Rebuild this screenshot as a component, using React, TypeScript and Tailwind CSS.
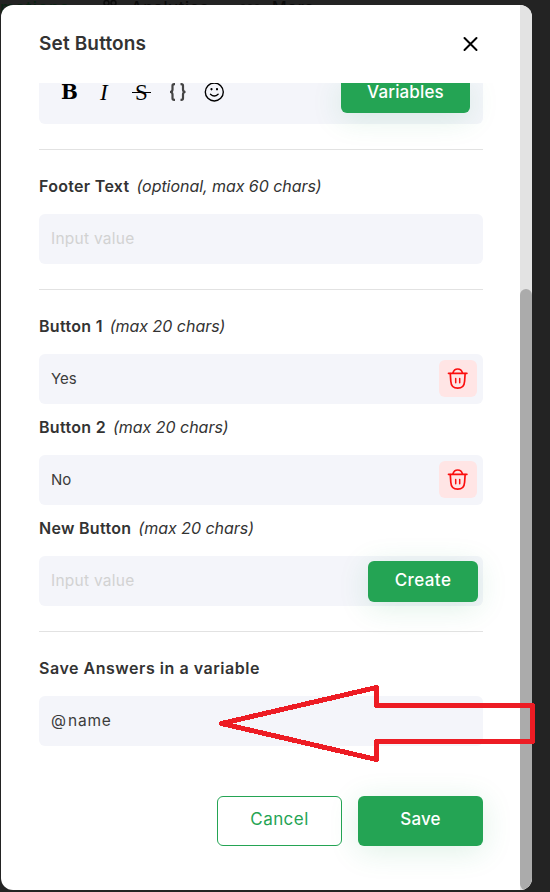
import { useState } from 'react'
import type { ReactNode } from 'react'

function TrashIcon() {
  return (
    <svg width="22" height="22" viewBox="0 0 22 22" fill="none" stroke="#fb0f0f" strokeWidth="1.7" strokeLinecap="round">
      <path d="M1.5 5.3h18.4" />
      <path d="M6 4.8C6.8 2 8.6 1 10.7 1s3.9 1 4.7 3.8" />
      <path d="M3.3 5.7l.5 7.5c.3 4.7 2.6 7 6.9 7s6.6-2.3 6.9-7l.5-7.5" />
      <path d="M8.7 10.5v4.3M12.700 10.5v4.3" strokeWidth="1.5" />
    </svg>
  )
}

function Label({ children, hint }: { children: ReactNode; hint?: ReactNode }) {
  return (
    <div className="flex h-6 items-center gap-[7px] whitespace-nowrap text-base text-[#333]">
      <span className="font-semibold tracking-[0.3px]">{children}</span>
      {hint}
    </div>
  )
}

function Field({ value, placeholder, children }: { value?: ReactNode; placeholder?: string; children?: ReactNode }) {
  return (
    <div className="mt-4 flex h-[50px] items-center justify-between rounded-md bg-[#f4f5fa] pl-3 text-[15px]">
      {value ? (
        <span className="text-[#3c3c3c]">{value}</span>
      ) : (
        <span className="text-[15.5px] tracking-[0.26px] text-[#d2d2d2]">{placeholder}</span>
      )}
      {children}
    </div>
  )
}

function DeleteButton({ onClick }: { onClick: () => void }) {
  return (
    <button onClick={onClick} className="mr-1.5 mb-px flex h-[37px] w-[38px] items-center justify-center rounded-md bg-[#ffe5e5]">
      <TrashIcon />
    </button>
  )
}

function Divider() {
  return <div className="mt-[25px] mb-6 h-px bg-[#e2e2e2]" />
}

const hint20 = <span className="italic tracking-[-0.02px]">(max 20 chars)</span>

export default function App() {
  const [removed, setRemoved] = useState<number[]>([])

  return (
    <div className="relative h-[892px] w-[550px] overflow-hidden bg-[#232323] pt-[5px] pl-px font-['Inter',sans-serif]">
      {/* dimmed page nav behind the modal */}
      <div className="absolute top-[-5px] left-0 flex h-6 items-center whitespace-nowrap text-base font-medium text-[#0b0b0b]">
        <span className="w-[103px] tracking-[1.3px] text-[#0a2213]">mations</span>
        <svg width="14" height="16" viewBox="0 0 14 16" fill="none" stroke="currentColor" strokeWidth="1.5">
          <circle cx="3.5" cy="4" r="2.5" />
          <circle cx="10.5" cy="4" r="2.5" />
          <circle cx="3.5" cy="12" r="2.5" />
          <circle cx="10.5" cy="12" r="2.5" />
        </svg>
        <span className="ml-3.5 w-[109px] tracking-[0.8px]">Analytics</span>
        <svg width="20" height="6" viewBox="0 0 20 6" fill="none" stroke="currentColor" strokeWidth="1.5">
          <circle cx="3" cy="3" r="2" />
          <circle cx="10" cy="3" r="2" />
          <circle cx="17" cy="3" r="2" />
        </svg>
        <span className="ml-3 tracking-[0.7px]">More</span>
      </div>

      <div className="relative flex h-[885px] w-[531px] overflow-hidden rounded-xl bg-white">
        <div className="flex w-[519px] flex-col">
          <header className="flex h-[78px] shrink-0 items-center justify-between pr-[41px] pl-[38px]">
            <h2 className="text-[19px] font-semibold tracking-[0.15px] text-[#333]">Set Buttons</h2>
            <button>
              <svg width="17" height="17" viewBox="0 0 17 17" stroke="#000" strokeWidth="2" strokeLinecap="round">
                <path d="M2.5 2l12 12M14.5 2l-12 12" />
              </svg>
            </button>
          </header>

          <main className="flex-1 overflow-hidden pr-[37px] pl-[38px]">
            {/* editor toolbar, scrolled partly under the header */}
            <div className="flex h-[41px] items-start justify-between rounded-b-md bg-[#f4f5fa] pr-[13px] pl-[22px]">
              <div className="flex h-[18px] items-center text-black">
                <span className="w-[39px] font-['DejaVu_Serif',serif] text-[20px] leading-none font-bold">B</span>
                <span className="w-8 font-['Liberation_Serif',serif] text-[23px] leading-none italic">I</span>
                <span className="relative flex w-[37px] font-['Liberation_Serif',serif] text-[23px] leading-none">
                  <span className="ml-[3px]">S</span>
                  <i className="absolute top-[11px] left-0 h-[1.5px] w-[19px] bg-black" />
                </span>
                <svg width="18" height="18" viewBox="0 0 18 18" fill="none" stroke="#444" strokeWidth="2.2" className="mr-[17px]">
                  <path d="M6 1.2H5.2Q3.5 1.2 3.5 2.7V6.5Q3.5 9 1 9Q3.5 9 3.5 11.5V15.3Q3.5 16.8 5.2 16.8H6M11.5 1.2h.8q1.7 0 1.7 1.5V6.5Q14 9 16.5 9Q14 9 14 11.5V15.3Q14 16.8 12.3 16.8H11.5" />
                </svg>
                <svg width="20" height="20" viewBox="0 0 20 20" fill="none" stroke="#000" strokeWidth="1.4" strokeLinecap="round">
                  <circle cx="10.3" cy="10" r="9" />
                  <path d="M6.5 12.3q3.8 3.5 7.6 0" />
                  <path d="M7.5 7.2v.1M13 7.2v.1" strokeWidth="2.2" />
                </svg>
              </div>
              <button className="flex h-[30px] w-[129px] justify-center rounded-b-md bg-[#24a454] text-[17px] leading-[18px] font-medium tracking-[0.15px] text-white shadow-[0_5px_30px_rgba(36,164,84,0.15)]">
                Variables
              </button>
            </div>

            <Divider />
            <Label hint={<span className="italic tracking-[-0.05px]">(optional, max 60 chars)</span>}>Footer Text</Label>
            <Field placeholder="Input value" />

            <Divider />
            <Label hint={hint20}>Button 1</Label>
            <Field value={removed.includes(1) ? '' : 'Yes'} placeholder="Input value">
              <DeleteButton onClick={() => setRemoved([...removed, 1])} />
            </Field>

            <div className="h-[11px]" />
            <Label hint={hint20}>Button 2</Label>
            <Field value={removed.includes(2) ? '' : 'No'} placeholder="Input value">
              <DeleteButton onClick={() => setRemoved([...removed, 2])} />
            </Field>

            <div className="h-[11px]" />
            <Label hint={hint20}>New Button</Label>
            <Field placeholder="Input value">
              <button className="mr-[5px] h-[41px] w-[110px] rounded-md bg-[#24a454] text-[17px] font-medium tracking-[0.4px] text-white shadow-[0_5px_30px_rgba(36,164,84,0.15)]">
                Create
              </button>
            </Field>

            <Divider />
            <Label>
              <span className="tracking-[0.53px]">Save Answers in a variable</span>
            </Label>
            <Field value={<span className="text-[15.5px] tracking-[0.8px]"><span className="mr-[2px] tracking-normal">@</span>name</span>} />

            <div className="mt-[50px] flex justify-end gap-4">
              <button className="h-[50px] w-[125px] rounded-md border border-[#24a454] pb-0.5 text-[17px] tracking-[0.45px] text-[#24a454]">
                Cancel
              </button>
              <button className="h-[50px] w-[125px] rounded-md bg-[#24a454] pb-0.5 text-[17px] font-medium tracking-[0.15px] text-white shadow-[0_5px_30px_rgba(36,164,84,0.15)]">
                Save
              </button>
            </div>
          </main>
        </div>

        {/* scrollbar */}
        <div className="flex w-3 flex-col bg-[#e3e3e3] pt-[284px]">
          <div className="flex-1 rounded-full bg-[#ababab]" />
        </div>
      </div>

      <svg
        className="absolute top-[680px] left-[214px]"
        width="326"
        height="88"
        viewBox="214 680 326 88"
        fill="none"
        stroke="#ed1c24"
        strokeWidth="5"
        strokeLinejoin="round"
        shapeRendering="crispEdges"
      >
        <path d="M221.5 723.5L376.5 687.5V705.5H532.5V741.5H376.5V759.5Z" />
      </svg>
    </div>
  )
}
